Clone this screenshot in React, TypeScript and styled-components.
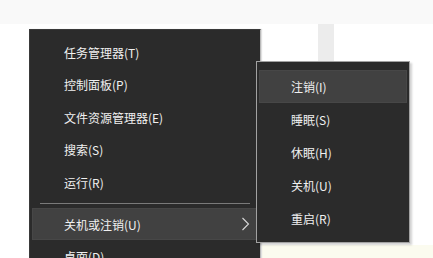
import React from "react";
import styled, { createGlobalStyle } from "styled-components";

const Global = createGlobalStyle`
  html, body { margin: 0; padding: 0; background: #ffffff; }
  body { font-family: "Microsoft YaHei", "Noto Sans CJK SC", "Noto Sans", sans-serif; }
`;

const Page = styled.div`
  position: relative;
  width: 433px;
  height: 258px;
  overflow: hidden;
  box-sizing: border-box;
  padding: 29px 0 0 29px;
  background:
    linear-gradient(#f9f9f9, #f9f9f9) 0 0 / 433px 24px no-repeat,
    linear-gradient(#ececec, #ececec) 318px 24px / 16px 40px no-repeat,
    linear-gradient(#fbfbef, #fbfbef) 262px 245px / 171px 13px no-repeat,
    #ffffff;
`;

const Menu = styled.div`
  width: 232px;
  box-sizing: border-box;
  background: #2b2b2b;
  border: 1px solid #3a3a3a;
  border-right: 1px solid #b9b9b9;
  padding: 6px 1px 0 1px;
  box-shadow: 1px 0 1px rgba(0, 0, 0, 0.12);
`;

const Item = styled.div<{ $active?: boolean; $h?: number }>`
  position: relative;
  display: flex;
  align-items: center;
  height: ${(p) => p.$h ?? 32.5}px;
  margin: 0 1px;
  padding-left: 31px;
  box-sizing: border-box;
  font-size: 12px;
  color: #f0f0f0;
  background: ${(p) => (p.$active ? "#414141" : "transparent")};
  border: 1px solid ${(p) => (p.$active ? "#474747" : "transparent")};
  white-space: nowrap;
`;

const Separator = styled.div`
  height: 9.5px;
  display: flex;
  align-items: center;
  padding: 0 9px 0 9px;
  &::after {
    content: "";
    flex: 1;
    height: 1px;
    background: #7a7a7a;
  }
`;

const Chevron = styled.svg`
  position: absolute;
  right: 7px;
  top: 50%;
  transform: translateY(-50%);
  width: 9px;
  height: 14px;
`;

const SubMenu = styled.div`
  position: absolute;
  left: 256px;
  top: 61px;
  width: 154px;
  box-sizing: border-box;
  background: #2b2b2b;
  border: 1px solid #a2a2a2;
  padding: 8px 1px 7px 1px;
  box-shadow: 2px 2px 2px rgba(0, 0, 0, 0.18);
`;

const SubItem = styled(Item)`
  height: 33px;
  padding-left: 31px;
`;

const mainItems = ["任务管理器(T)", "控制面板(P)", "文件资源管理器(E)", "搜索(S)", "运行(R)"];
const subItems = ["注销(I)", "睡眠(S)", "休眠(H)", "关机(U)", "重启(R)"];

export default function App() {
  return (
    <>
      <Global />
      <Page>
        <Menu>
          {mainItems.map((t) => (
            <Item key={t}>{t}</Item>
          ))}
          <Separator />
          <Item $active $h={32}>
            关机或注销(U)
            <Chevron viewBox="0 0 9 14">
              <polyline points="1.5,1 7.5,7 1.5,13" fill="none" stroke="#d8d8d8" strokeWidth="1.1" />
            </Chevron>
          </Item>
          <Item>桌面(D)</Item>
        </Menu>
        <SubMenu>
          {subItems.map((t, i) => (
            <SubItem key={t} $active={i === 0}>
              {t}
            </SubItem>
          ))}
        </SubMenu>
      </Page>
    </>
  );
}
